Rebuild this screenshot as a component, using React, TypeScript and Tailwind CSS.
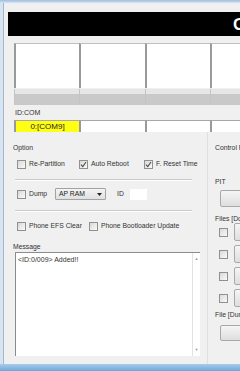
const font = { fontFamily: '"Liberation Sans", Arial, sans-serif' };

function Check({ on = false }: { on?: boolean }) {
  return (
    <span className="inline-flex h-[9px] w-[9px] shrink-0 items-center justify-center border border-[#909090] bg-gradient-to-br from-[#d9d9d9] to-[#fafafa]">
      {on && (
        <svg width="7" height="7" viewBox="0 0 7 7">
          <path d="M1 3.6 L2.8 5.6 L6 1" fill="none" stroke="#4b4b4b" strokeWidth="1.1" />
        </svg>
      )}
    </span>
  );
}

function Opt({ label, on, w }: { label: string; on?: boolean; w?: string }) {
  return (
    <div className={`flex items-center gap-[3px] ${w ?? ""}`}>
      <Check on={on} />
      <span className="text-[6.8px] leading-none text-[#333]">{label}</span>
    </div>
  );
}

function Sep() {
  return (
    <div className="ml-[11px] w-[177px]">
      <div className="h-px bg-[#c9c9c9]" />
      <div className="h-px bg-white" />
    </div>
  );
}

const cols = ["w-[65px]", "w-[66px]", "w-[65px]", "w-[65px]"];

export default function App() {
  return (
    <div className="flex h-[371px] w-[240px] flex-col overflow-hidden bg-[#f0f0f0]" style={font}>
      <div className="h-[3px] bg-gradient-to-b from-[#9ebde0] to-[#d6e4f2]" />
      <div className="flex h-[361px]">
        <div className="w-[4px] border-r border-[#a7b7c9] bg-[#d7e4f1]" />
        <div className="flex flex-1 flex-col overflow-hidden bg-[#f0f0f0]">
          {/* banner */}
          <div className="ml-[4px] mt-[9px] flex h-[24px] shrink-0 items-center overflow-hidden bg-black pl-[225px]">
            <span className="whitespace-nowrap text-[17px] font-bold leading-none text-white">Odin3</span>
          </div>

          {/* device boxes */}
          <div className="ml-[10px] mt-[7px] flex shrink-0">
            {cols.map((c, i) => (
              <div key={i} className={`${c} h-[45px] shrink-0 border-l-2 border-t border-l-[#9a9a9a] border-t-[#c0c0c0] bg-white`} />
            ))}
          </div>
          <div className="ml-[10px] mt-px flex shrink-0">
            {cols.map((c, i) => (
              <div key={i} className={`${c} shrink-0 border-l border-[#c4c4c4]`}>
                <div className="h-[5px] bg-[#e6e6e6]" />
                <div className="h-[11px] bg-[#c9c9c9]" />
              </div>
            ))}
          </div>
          <div className="ml-[11px] flex h-[15px] shrink-0 items-center text-[7px] leading-none text-[#333]">ID:COM</div>
          <div className="ml-[10px] flex h-[12px] shrink-0">
            {cols.map((c, i) => (
              <div
                key={i}
                className={`${c} flex shrink-0 items-center justify-center border-l-2 border-t border-l-[#9a9a9a] border-t-[#a8a8a8] ${i === 0 ? "bg-[#ffff14]" : "bg-white"}`}
              >
                {i === 0 && <span className="text-[8px] leading-none text-[#222]">0:[COM9]</span>}
              </div>
            ))}
          </div>

          {/* lower area */}
          <div className="flex flex-1">
            <div className="flex w-[203px] shrink-0 flex-col">
              <div className="ml-[9px] mt-[11px] flex h-[10px] items-center text-[6.8px] leading-none text-[#333]">Option</div>
              <div className="ml-[13px] mt-[6px] flex h-[10px] items-center">
                <Opt label="Re-Partition" w="w-[62px]" />
                <Opt label="Auto Reboot" on w="w-[65px]" />
                <Opt label="F. Reset Time" on />
              </div>
              <div className="mt-[10px]">
                <Sep />
              </div>
              <div className="ml-[13px] mt-[7px] flex h-[12px] items-center">
                <Opt label="Dump" w="w-[38px]" />
                <div className="flex h-[12px] w-[51px] items-center justify-between rounded-[1px] border border-[#a3a3a3] bg-gradient-to-b from-[#f4f4f4] to-[#e0e0e0] pl-[3px] pr-[3px]">
                  <span className="text-[6.8px] leading-none text-[#222]">AP RAM</span>
                  <svg width="5" height="3" viewBox="0 0 5 3">
                    <path d="M0 0 H5 L2.5 3 Z" fill="#222" />
                  </svg>
                </div>
                <span className="ml-[11px] text-[6.8px] leading-none text-[#333]">ID</span>
                <div className="ml-[6px] h-[11px] w-[17px] bg-white" />
              </div>
              <div className="mt-[10px]">
                <Sep />
              </div>
              <div className="ml-[13px] mt-[9px] flex h-[10px] items-center">
                <Opt label="Phone EFS Clear" w="w-[72px]" />
                <Opt label="Phone Bootloader Update" />
              </div>
              <div className="ml-[9px] mt-[11px] flex h-[10px] items-center text-[6.8px] leading-none text-[#333]">Message</div>
              <div className="ml-[11px] flex h-[104px] w-[185px] border-l border-t border-[#8c8c8c] bg-white">
                <div className="flex-1 pl-[2px] pt-[3px] text-[7px] leading-none text-[#333]">&lt;ID:0/009&gt; Added!!</div>
                <div className="flex w-[8px] flex-col items-center justify-between border-l border-[#e2e2e2] py-[4px] text-[4px] leading-none text-[#9a9a9a]">
                  <span>▲</span>
                  <span>▼</span>
                </div>
              </div>
            </div>

            <div className="flex flex-1 flex-col border-l border-[#e0e0e0] pl-[7px]">
              <div className="mt-[11px] flex h-[10px] items-center whitespace-nowrap text-[6.8px] leading-none text-[#333]">Control Panel</div>
              <div className="mt-[24px] flex h-[10px] items-center text-[6.8px] leading-none text-[#333]">PIT</div>
              <div className="ml-[5px] mt-[3px] h-[17px] w-[40px] rounded-[2px] border border-[#a9a9a9] bg-gradient-to-b from-[#f5f5f5] to-[#dedede]" />
              <div className="mt-[7px] flex h-[10px] items-center whitespace-nowrap text-[6.8px] leading-none text-[#333]">Files [Download]</div>
              <div className="mt-[-2px] flex flex-col gap-[3px]">
                {[0, 1, 2, 3].map((i) => (
                  <div key={i} className="flex h-[19px] items-center">
                    <div className="ml-[4px]">
                      <Check />
                    </div>
                    <div className="ml-[6px] h-[18px] w-[30px] rounded-[2px] border border-[#a9a9a9] bg-gradient-to-b from-[#f5f5f5] to-[#dedede]" />
                  </div>
                ))}
              </div>
              <div className="mt-[3px] flex h-[10px] items-center whitespace-nowrap text-[6.8px] leading-none text-[#333]">File [Dump]</div>
              <div className="ml-[5px] mt-[5px] h-[16px] w-[40px] rounded-[2px] border border-[#a9a9a9] bg-gradient-to-b from-[#f5f5f5] to-[#dedede]" />
            </div>
          </div>
        </div>
      </div>
      <div className="h-[7px] bg-gradient-to-b from-[#a9cbea] to-[#6fa6da]" />
    </div>
  );
}
